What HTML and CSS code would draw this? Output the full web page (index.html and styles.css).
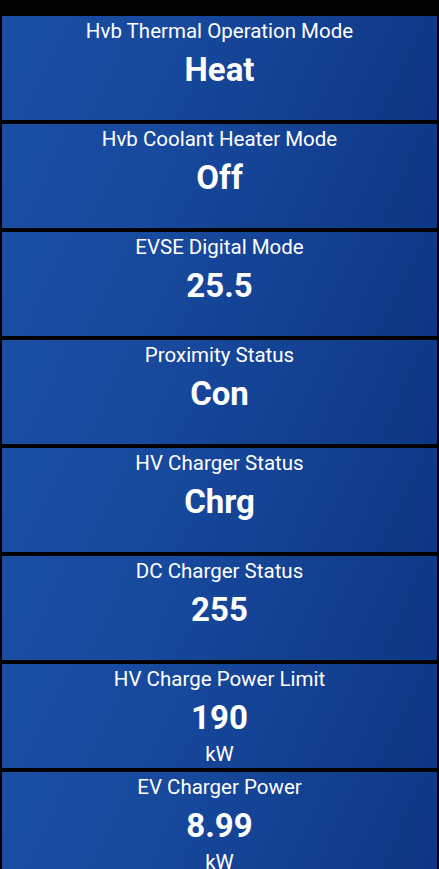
FILE: index.html
```html
<!DOCTYPE html>
<html>
<head>
<meta charset="utf-8">
<link rel="stylesheet" href="styles.css">
</head>
<body>
<div class="list">
  <div class="card"><div class="title">Hvb Thermal Operation Mode</div><div class="value">Heat</div></div>
  <div class="card"><div class="title">Hvb Coolant Heater Mode</div><div class="value">Off</div></div>
  <div class="card"><div class="title">EVSE Digital Mode</div><div class="value">25.5</div></div>
  <div class="card"><div class="title">Proximity Status</div><div class="value">Con</div></div>
  <div class="card"><div class="title">HV Charger Status</div><div class="value">Chrg</div></div>
  <div class="card"><div class="title">DC Charger Status</div><div class="value">255</div></div>
  <div class="card"><div class="title">HV Charge Power Limit</div><div class="value">190</div><div class="unit">kW</div></div>
  <div class="card"><div class="title">EV Charger Power</div><div class="value">8.99</div><div class="unit">kW</div></div>
</div>
</body>
</html>
```
FILE: styles.css
```css
html, body {
  margin: 0;
  padding: 0;
  background: #000;
  height: 869px;
  overflow: hidden;
}
body {
  font-family: Roboto, "Noto Sans", sans-serif;
  color: #fff;
}
.list {
  display: flex;
  flex-direction: column;
  gap: 4px;
  padding: 16px 2px 0 2px;
}
.card {
  height: 104px;
  flex: none;
  box-sizing: border-box;
  background: linear-gradient(115deg, #1a4fa5 0%, #17489c 40%, #0e3684 100%);
  text-align: center;
  overflow: hidden;
}
.title {
  font-size: 20.5px;
  line-height: 30px;
  font-weight: 400;
}
.value {
  font-size: 33px;
  line-height: 47px;
  font-weight: 700;
}
.unit {
  font-size: 20.5px;
  line-height: 26px;
  font-weight: 400;
}
```
